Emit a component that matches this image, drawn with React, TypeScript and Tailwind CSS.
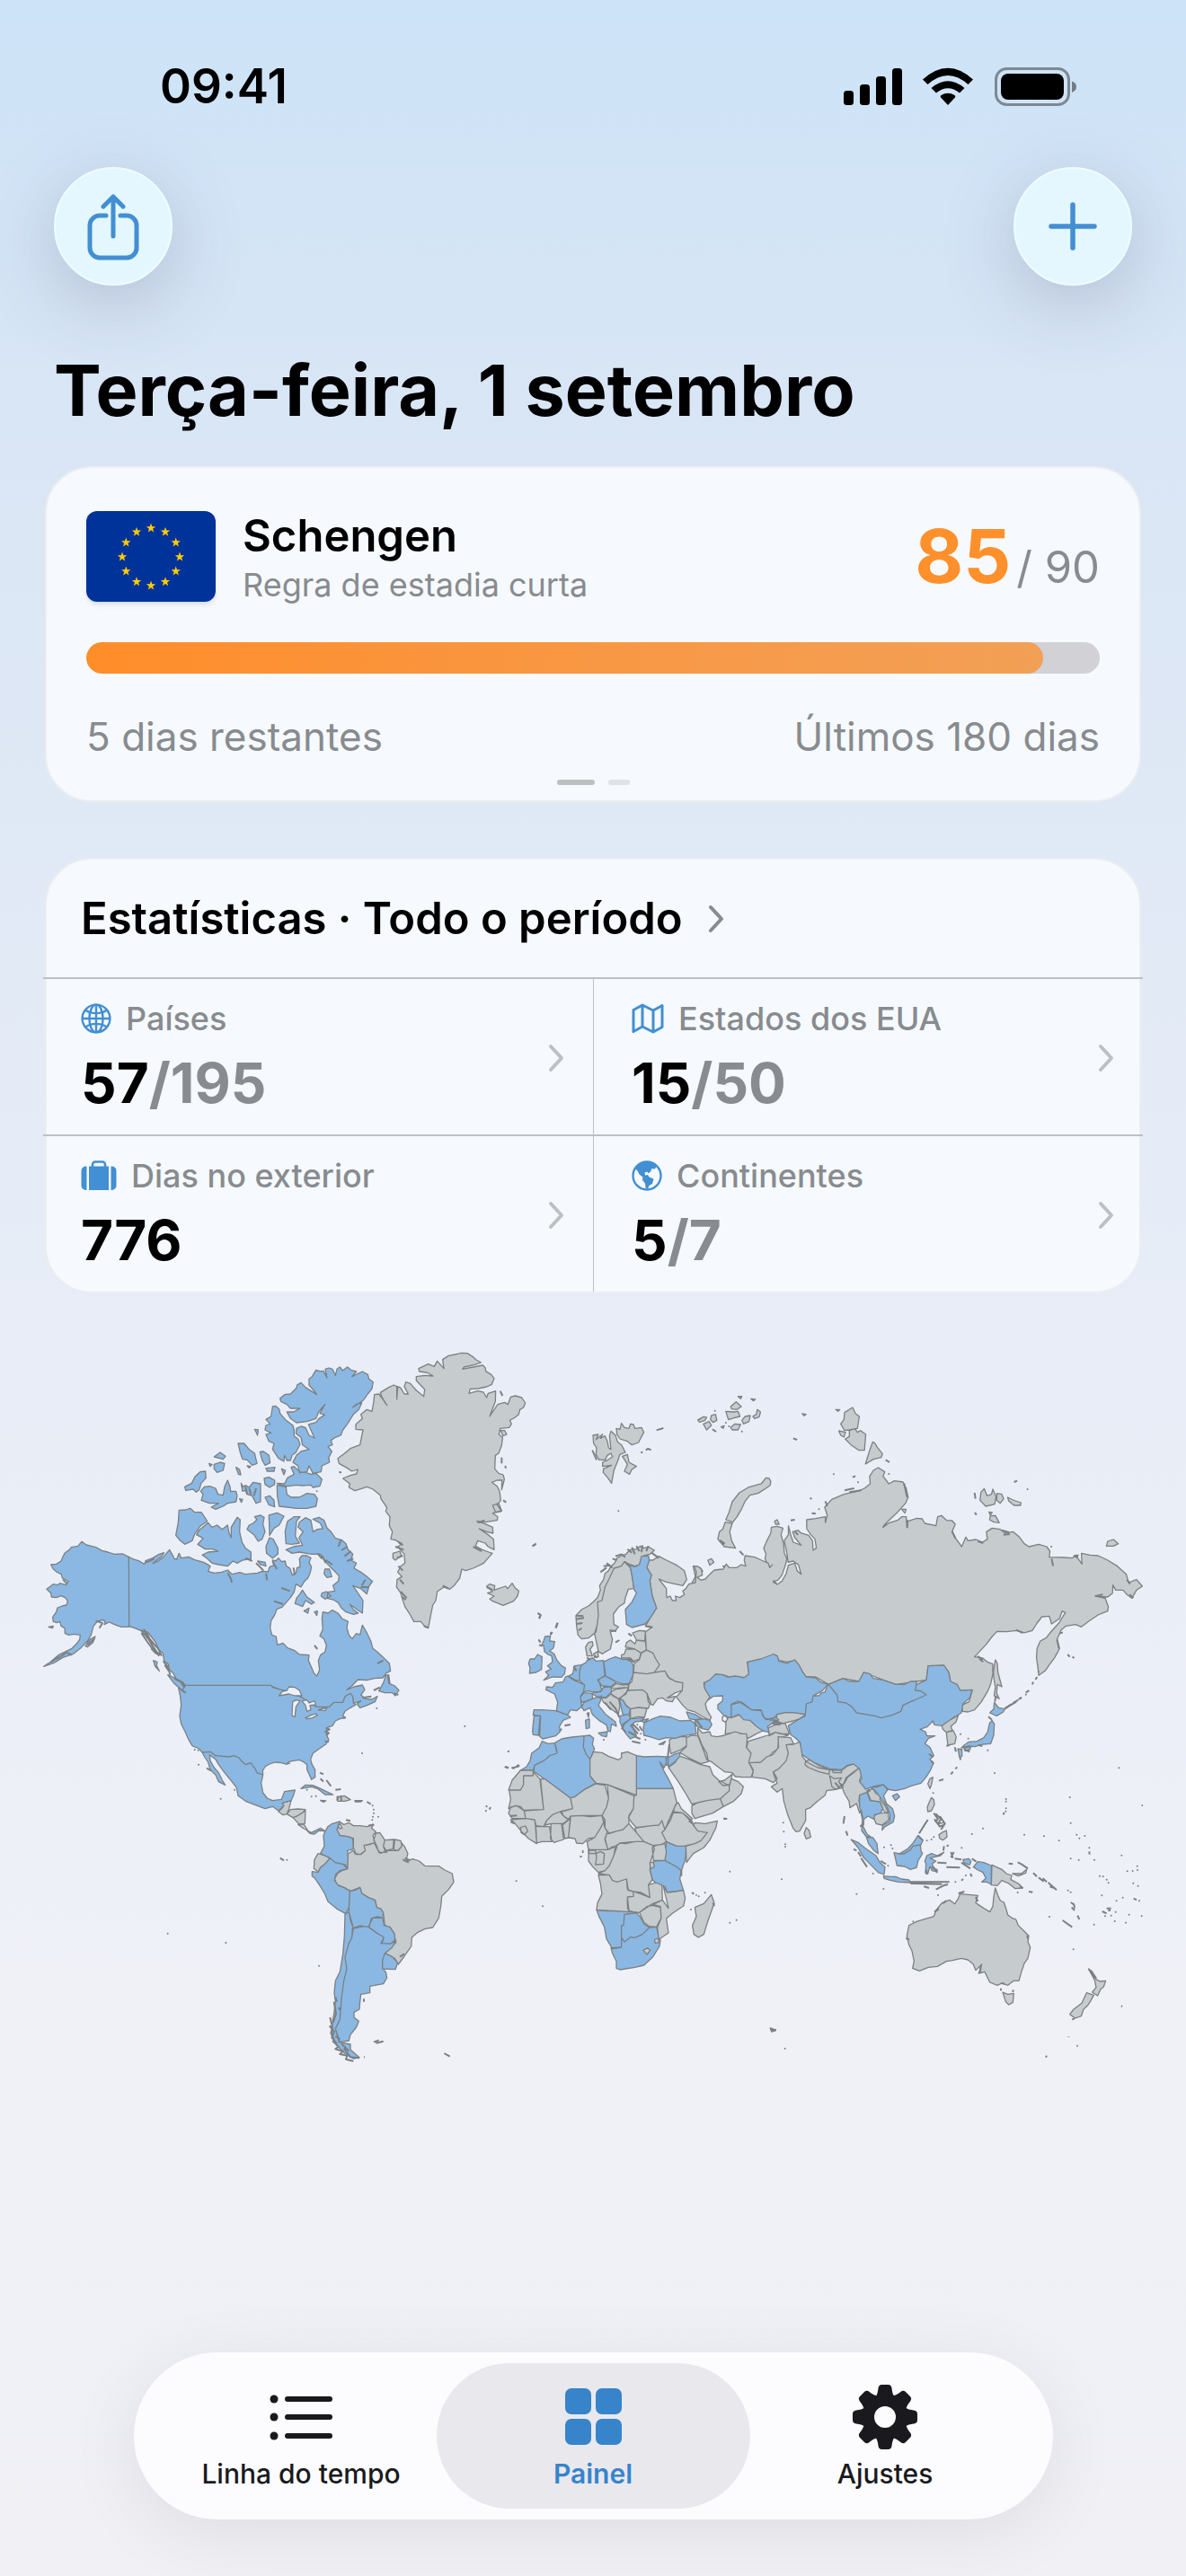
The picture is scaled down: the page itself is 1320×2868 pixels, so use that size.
import type { ReactNode } from "react";

type Layer = { kind: "visited" | "land" | "water" | "coast" | "dots"; d: string };
type Region = { name: string; transform: string; layers: Layer[] };

const layerClass = {
  visited: "fill-[#8ab8e3] stroke-[#7c8082]",
  land: "fill-[#c6cbce] stroke-[#7c8082]",
  water: "fill-[#ecf0f8] stroke-[#7c8082]",
  coast: "fill-none stroke-[#7c8082] [stroke-width:2px]",
  dots: "fill-none stroke-[#7c8082] [stroke-width:2px]",
};

// Each region has its own drawing units, placed on the map by its transform
const regions: Region[] = [
  {
    name: "north-america",
    transform: "translate(40 1490) scale(0.33333)",
    layers: [
      {
        kind: "visited",
        d: `M310,724 290,714 262,715 240,708 220,703 200,692 185,688 168,684 153,673 140,688 118,692 112,700 96,712 90,724 84,738 68,748 50,750 58,765 70,775 85,782 88,795 108,806 100,818 80,812 72,818 58,815 36,832 50,845 52,858 68,860 85,854 100,862 106,872 102,885 88,888 72,894 68,908 56,925 58,940 70,944 80,940 84,955 96,962 97,980 110,985 125,982 148,985 146,1000 135,1015 120,1030 100,1040 75,1052 50,1074 26,1090 60,1078 90,1060 125,1048 150,1028 172,1005 184,985 188,970 192,955 205,940 222,934 232,940 228,950 245,942 262,950 285,958 311,958Z
        M310,724 325,732 345,738 362,748 370,735 390,728 410,716 428,710 420,722 400,738 390,746 408,738 425,725 446,700 456,718 462,730 470,732 478,712 485,728 510,724 530,734 560,742 582,755 575,772 595,778 620,775 640,768 655,782 680,776 700,782 740,778 755,772 775,774 780,758 795,752 790,735 800,738 810,728 820,740 832,738 836,755 848,762 856,785 868,778 872,760 882,758 880,730 888,720 905,720 918,728 912,742 920,758 916,776 908,795 895,808 885,825 868,815 862,842 850,860 832,880 822,892 805,898 796,920 785,938 782,962 788,985 802,990 806,1018 825,1012 840,1028 862,1036 880,1050 912,1052 910,1070 918,1088 928,1112 938,1122 947,1102 943,1070 950,1052 965,1042 970,1020 962,998 948,988 958,965 955,930 958,908 975,912 990,902 1008,912 1022,930 1042,940 1038,960 1045,985 1056,998 1070,980 1082,984 1090,952 1105,978 1118,1005 1125,1030 1140,1042 1158,1058 1180,1080 1184,1105 1170,1112 1158,1128 1130,1130 1105,1136 1075,1134 1055,1155 1038,1168 1062,1158 1090,1152 1098,1168 1085,1185 1100,1198 1122,1200 1140,1190 1132,1208 1100,1222 1082,1228 1072,1215 1085,1205 1065,1212 1048,1226 1030,1235 1018,1262 940,1250 890,1225 850,1175 815,1168 785,1155 500,1155 490,1142 470,1136 458,1112 445,1100 442,1082 428,1072 424,1045 410,1035 400,1010 385,990 372,975 350,970 330,962 311,956Z
        M935,100 948,104 960,103 972,127 966,97 978,93 990,97 1000,118 1005,97 1015,90 1024,102 1040,90 1052,100 1070,105 1055,122 1090,105 1108,115 1112,130 1126,140 1122,162 1108,180 1094,200 1058,225 1070,214 1088,210 1078,232 1060,248 1040,280 1025,300 1018,318 1000,325 985,335 990,350 975,355 988,372 978,392 980,408 955,420 952,440 925,445 912,420 905,440 880,443 875,420 858,408 870,385 885,372 912,365 890,350 885,325 868,312 870,295 885,288 900,292 912,318 930,327 918,300 910,282 935,275 945,262 964,250 948,244 965,215 945,238 935,262 905,272 870,276 850,262 838,240 860,240 882,228 850,228 838,215 818,205 815,195 830,182 850,180 870,160 872,150 885,142 900,158 938,182 925,165 912,150 912,130 922,122Z
        M790,222 800,220 812,230 815,245 835,268 858,285 862,300 862,320 875,330 882,348 868,375 855,385 850,402 838,402 830,385 828,405 810,395 800,380 790,365 795,345 778,338 768,315 785,310 765,300 768,285 782,280 768,265 785,255Z
        M675,345 695,345 712,365 730,378 738,412 722,418 705,400 690,398 682,375Z M748,373 760,372 778,385 782,410 765,418 755,400Z
        M595,390 615,375 633,388 625,398Z M595,415 615,408 630,412 625,435 605,442 595,430Z M578,412 588,416 582,422Z
        M497,490 520,478 532,455 548,440 566,438 568,460 552,478 545,500 535,508 525,498 500,502Z
        M552,535 558,515 550,505 562,490 580,488 600,495 608,515 625,518 630,490 640,468 648,490 650,505 668,505 672,520 668,540 640,545 625,555 600,565 585,558 610,545 580,545Z
        M685,478 692,490 700,485 712,492 725,475 750,480 750,540 735,545 722,520 705,515 700,502 690,505Z M680,530 690,532 686,542Z
        M762,462 778,458 797,468 797,482 780,492 765,482Z M768,428 798,425 795,438 772,438Z M820,430 833,435 828,450Z M668,425 680,432 684,450 676,448Z M730,298 742,300 740,318Z M705,420 717,422 712,427Z
        M805,478 830,480 840,460 862,448 852,425 862,422 880,440 900,442 918,448 935,445 955,465 948,488 925,492 918,484 888,486 870,484 842,488 820,486Z
        M805,485 835,490 838,515 852,525 880,525 905,512 930,515 940,530 935,555 905,562 870,562 838,558 812,555 806,520Z M765,525 780,520 795,535 797,557 778,550Z
        M478,568 500,567 515,562 530,575 552,575 572,605 548,622 530,648 522,670 497,682 480,668 467,652 475,610Z
        M575,610 588,625 605,618 622,632 640,618 645,645 652,660 652,625 672,592 682,600 680,640 688,675 700,695 718,708 718,730 690,735 672,745 658,738 640,755 610,750 588,745 570,728 555,718 575,708 608,705 590,698 565,698 540,682 558,662 536,650 545,635Z
        M730,590 750,585 762,592 758,615 765,640 755,665 742,672 728,650 705,632 712,618 725,612 738,600Z
        M778,585 805,577 828,588 812,618 795,628 780,652Z M780,660 792,665 808,695 808,715 790,728 770,712 768,690Z
        M835,680 832,640 840,605 862,590 882,590 870,605 868,630 866,655 880,678 855,682Z
        M880,608 900,593 918,602 925,640 940,632 958,630 950,612 925,598 945,592 962,602 972,628 985,640 1000,662 1022,668 1035,680 1042,700 1058,715 1052,735 1070,745 1062,762 1085,775 1105,790 1124,806 1112,822 1105,848 1085,830 1058,820 1072,840 1092,870 1090,912 1072,900 1048,882 1060,900 1076,912 1060,916 1035,908 1020,895 1010,878 995,868 972,862 975,842 998,838 992,820 1010,805 1012,788 1000,775 985,760 968,742 950,715 920,715 880,708 855,712 835,700 860,690 890,685 878,660 892,640 875,625Z
        M890,835 905,858 930,876 920,882 900,870 890,890 878,885 865,880 870,862 880,850Z M955,845 970,840 985,855 965,865 952,855Z M965,765 980,765 988,790 972,793 962,780Z
        M895,905 912,895 908,912Z M930,908 940,905 938,920Z M740,738 765,742 768,755 750,750Z
        M1168,1120 1160,1145 1145,1172 1165,1178 1190,1178 1200,1188 1212,1170 1198,1155 1182,1148 1178,1118Z
        M440,1118 462,1128 488,1142 500,1165 500,1182 482,1165 460,1145Z M165,1022 180,1000 198,990 190,1010 172,1025Z M392,1070 405,1075 403,1088 412,1105 398,1090Z M42,958 58,955 55,962Z`,
      },
      {
        kind: "coast",
        d: `M350,968 365,985 378,1002 390,1022 402,1040 415,1052 M360,965 372,990 388,1010 408,1030 420,1055 M352,978 372,1008 392,1035 412,1055 M368,975 380,998 400,1022 M385,1030 402,1048 M425,1072 440,1090 448,1118 M430,1085 446,1108 M462,1130 482,1140 496,1160 498,1178 M200,938 222,945 212,962 M100,1042 120,1052 M640,778 650,795 654,810 M768,780 772,802 M860,760 864,785 M820,828 848,838 M795,872 825,882 M930,1020 940,1032 M700,728 722,738 M735,745 760,770 M790,740 805,765 M1090,1195 1120,1190 M1128,1170 1148,1160 M940,712 955,730 M955,720 968,745 M968,735 990,750 M1018,668 1010,690 M1040,690 1020,702 M1052,705 1030,722 M1060,730 1038,738 M1100,800 1088,820 M1110,825 1085,825 M1140,1080 1160,1070 M50,1075 75,1058 M70,1065 100,1045 M700,490 705,515 M712,495 718,515 M735,495 728,520 M365,745 368,735 M370,742 395,730 M1175,1120 1180,1148 M1195,1180 1210,1185 M90,800 105,815 M172,1018 195,998`,
      },
    ],
  },
  {
    name: "americas",
    transform: "translate(160 1840) scale(0.33333)",
    layers: [
      {
        kind: "land",
        d: `M450,525 465,510 460,497 475,492 492,488 485,515 478,533 465,536Z M478,533 490,518 515,516 540,518 528,530 512,540 498,545Z M498,545 515,538 540,522 538,565 518,566Z M515,568 535,568 548,588 535,582Z
        M645,475 670,472 690,485 672,490 648,490Z M590,487 608,489 600,493Z M705,488 730,488 725,492 706,492Z
        M655,560 668,568 685,562 700,572 720,572 745,575 768,568 760,580 775,592 765,605 772,628 755,635 735,638 740,655 722,668 708,665 700,645 700,614 680,608 655,605 645,590Z
        M775,597 788,595 805,620 800,640 812,660 785,662 778,640 768,620Z M805,620 835,618 832,650 805,655 800,640Z M838,618 858,622 862,640 848,655 835,652Z
        M570,685 582,665 605,672 622,680 605,700 590,712 582,726 568,715Z
        M680,668 698,655 708,668 725,668 740,655 735,638 770,630 780,650 790,664 815,655 850,655 862,640 860,628 870,640 882,665 875,690 898,683 920,690 938,706 985,707 1005,720 1030,732 1035,760 1018,785 995,808 992,840 985,880 965,912 940,916 915,928 895,945 893,975 870,1008 850,1035 838,1015 805,998 842,962 835,930 822,912 805,905 800,865 792,850 778,845 772,820 750,812 728,798 722,778 690,790 668,778 645,768 637,750 648,730 662,722 680,716Z`,
      },
      {
        kind: "visited",
        d: `M140,103 425,103 430,110 460,118 485,125 530,145 575,175 620,175 635,160 665,160 672,140 690,130 698,140 700,162 708,168 690,178 672,190 665,205 672,212 655,215 640,222 630,238 612,245 610,268 618,285 608,300 590,312 565,330 557,350 562,368 572,385 572,410 560,418 552,400 545,385 545,368 532,358 520,352 500,355 485,358 478,367 460,362 440,360 420,366 405,375 397,388 398,402 378,395 372,382 357,362 340,368 328,358 318,345 300,338 285,342 240,338 222,325 195,327 185,315 162,305 150,285 140,262 125,232 120,205 125,170 122,140 116,112 128,120Z
        M195,327 222,325 240,338 285,342 300,338 318,345 328,358 340,368 357,362 372,382 378,395 398,402 392,430 398,462 412,480 430,488 460,484 470,458 505,453 500,470 492,488 462,496 468,505 450,522 430,508 405,515 365,500 340,490 315,472 310,445 292,422 270,395 250,368 240,350 220,335 222,355 235,378 250,395 262,420 272,436 250,425 240,402 222,385 215,360 205,345Z
        M545,588 560,595 590,580 605,590 585,588 570,600 555,598Z
        M525,448 540,436 565,437 590,448 610,458 632,468 605,468 580,448 560,442Z
        M605,592 615,575 630,565 655,558 645,585 655,605 680,608 698,615 700,650 680,655 682,675 680,716 665,700 640,695 622,680 590,665 603,640 600,605Z
        M562,725 582,728 590,712 605,700 622,680 640,695 672,702 680,716 655,722 640,735 637,755 650,772 668,778 688,790 685,845 675,866 645,850 615,825 605,800 590,775 572,748 562,740Z
        M688,790 705,788 722,778 728,798 750,812 772,820 778,845 792,850 800,862 798,880 765,880 750,910 735,908 700,915 690,888 685,860Z
        M760,882 780,876 798,880 802,905 822,910 838,935 838,955 825,966 792,965 802,945 770,925 752,912Z
        M697,915 720,906 750,910 775,928 802,945 795,965 825,966 842,955 830,978 805,998 797,1022 797,1048 808,1060 812,1080 800,1100 755,1108 755,1130 725,1135 722,1160 720,1185 702,1195 702,1212 718,1225 710,1245 690,1270 685,1290 655,1295 640,1250 655,1220 660,1150 668,1090 678,1050 672,1010 685,965 695,945Z
        M805,998 830,1010 848,1030 840,1052 797,1050 797,1022Z
        M672,866 685,860 700,915 695,945 685,965 672,1010 678,1050 668,1090 660,1150 655,1220 640,1250 652,1295 690,1302 690,1320 720,1346 700,1350 668,1330 645,1305 628,1275 628,1240 635,1200 640,1160 636,1130 640,1090 655,1060 665,1000 670,940Z`,
      },
      {
        kind: "water",
        d: `M452,138 462,124 478,120 485,108 505,110 520,120 528,138 505,138 485,132Z M497,158 510,152 522,155 508,175 505,208 495,205Z M528,155 545,152 552,162 570,155 575,168 555,170 558,185 545,190 540,170Z M540,212 558,203 575,198 580,203 560,213 545,215Z M582,185 600,180 612,180 605,188Z M648,570 656,568 662,580 655,582Z`,
      },
      {
        kind: "coast",
        d: `M608,245 620,250 606,258 618,262 610,270 M665,212 675,210 M605,290 618,292 M478,362 488,365 M635,1160 642,1200 632,1230 M622,1212 630,1245 625,1265 635,1285 M620,1240 636,1260 628,1280 645,1300 M630,1290 650,1310 640,1318 665,1325 655,1335 680,1340 675,1352 700,1358 M640,1275 655,1285 M660,1300 685,1325 M668,1315 690,1345 720,1348 M735,1345 738,1345 M768,1295 785,1288 M775,1298 800,1292 M1003,1332 1022,1343 M640,1145 645,1160 M650,1180 658,1188 M455,680 468,688 M650,475 645,488 M658,472 660,490 M675,553 690,556 M865,685 885,695 M872,680 890,688 M855,1010 870,1000 M210,380 225,388 M125,118 140,128 M588,395 600,400 M590,415 600,425 M610,420 625,440 M640,452 658,450 M745,492 758,500 M735,1150 735,1160 M768,568 750,572`,
      },
      {
        kind: "dots",
        d: `M729,330h.1 M1072,240h.1 M778,180h.1 M183,368h.1 M257,482h.1 M303,452h.1 M80,932h.1 M274,963h.1 M585,1040h.1 M560,475h.1 M575,473h.1 M764,505h.1 M768,518h.1 M768,530h.1 M765,542h.1 M763,553h.1 M783,542h.1 M478,686h.1 M545,452h.1 M170,318h.1 M182,320h.1`,
      },
    ],
  },
  {
    name: "greenland",
    transform: "translate(340 1490) scale(0.33333)",
    layers: [
      {
        kind: "land",
        d: `M500,48 520,43 540,44 558,55 570,66 586,75 565,82 530,90 524,97 560,90 592,84 600,92 602,104 620,115 630,128 622,148 605,156 575,162 550,163 546,178 575,170 594,174 605,192 610,178 635,170 634,205 615,255 625,240 642,215 665,208 676,215 685,190 700,186 722,192 734,210 728,225 716,232 712,248 700,258 682,268 688,280 680,292 650,295 646,315 658,325 655,352 645,378 634,385 632,430 645,445 660,450 664,465 655,500 656,468 640,468 622,475 640,488 648,505 652,535 640,550 655,572 625,578 642,590 640,602 620,605 600,608 572,605 600,614 625,625 626,645 605,640 580,630 610,650 628,665 630,700 610,690 600,678 575,670 568,688 590,700 612,708 624,712 608,730 595,745 560,762 535,770 522,765 515,795 498,818 482,832 462,825 440,840 435,870 425,885 418,920 410,962 398,955 385,940 362,940 348,915 332,890 322,860 318,845 304,825 306,800 322,790 308,775 318,755 332,745 330,715 308,690 322,680 300,668 285,665 290,640 280,620 282,590 268,572 272,560 252,530 250,518 225,498 205,490 185,497 165,503 145,492 148,480 125,462 150,452 170,447 175,432 155,438 135,425 112,412 108,395 128,380 150,362 182,350 188,320 192,300 168,298 168,282 190,262 185,248 205,232 222,238 228,205 230,182 245,180 260,200 272,218 255,190 250,175 278,158 295,150 305,155 305,198 308,155 318,160 330,180 343,180 330,155 335,140 350,145 370,168 395,188 398,165 370,135 370,122 398,118 426,120 405,108 380,105 378,95 410,80 430,88 440,70 462,95 458,65 478,52Z
        M292,712 315,705 320,720 300,735 292,728Z M652,302 665,302 672,315 660,320Z M625,552 645,545 655,570 635,575Z
        M605,822 615,815 632,820 630,835 650,828 668,822 675,830 690,812 700,828 712,838 708,855 695,872 660,886 640,878 625,872 615,865 630,855 608,845 625,840Z`,
      },
      {
        kind: "coast",
        d: `M758,688 770,681 M776,912 785,918 781,930 M836,962 842,944 M818,985 824,975 M655,392 655,412 M650,170 658,186 M667,420 669,428 M112,440 120,443 M660,535 670,542 M310,755 325,770 M315,800 328,815 M318,840 338,862 M322,858 335,868 M605,825 625,835 M575,610 598,602 M560,690 588,705 M458,820 478,830 M395,955 408,960 M300,690 328,700 M310,675 325,685 M305,728 325,720`,
      },
      { kind: "dots", d: "M38,505h.1" },
    ],
  },
  {
    name: "svalbard",
    transform: "translate(640 1560) scale(0.33333)",
    layers: [
      {
        kind: "land",
        d: `M60,108 78,105 70,122 92,104 85,118 100,110 108,128 112,150 120,155 115,110 120,94 135,108 142,130 155,140 168,165 150,172 142,195 130,225 122,268 108,248 94,232 95,220 122,208 92,212 92,198 110,190 125,180 120,168 108,175 100,190 80,190 70,172 72,150 62,135Z
        M138,85 150,88 155,68 165,82 180,85 185,70 195,72 200,85 222,82 230,98 218,120 212,132 190,140 175,128 150,120 140,105Z M158,178 175,172 180,198 205,212 190,222 182,238 165,228 175,205Z`,
      },
      {
        kind: "coast",
        d: `M272,91 295,84 M236,157 244,153 254,157 M58,158 72,190 M222,162 224,168 M410,58 420,52`,
      },
    ],
  },
  {
    name: "north-asia",
    transform: "translate(740 1540) scale(0.35714 0.33333)",
    layers: [
      {
        kind: "land",
        d: `M328,608 320,600 312,580 315,565 308,545 318,520 330,495 332,475 350,472 368,478 362,500 370,530 372,560 380,580 376,600 365,635 352,652 335,656 350,666 365,655 378,630 385,602 405,595 412,620 425,632 416,600 400,588 384,592 380,560 372,520 385,500 385,470 392,500 400,525 425,535 405,510 398,490 415,485 425,495 448,502 460,520 462,552 472,545 468,515 455,500 442,480 442,450 470,446 500,440 500,460 506,435 498,408 520,382 560,364 600,355 622,345 640,330 638,305 650,285 665,276 685,290 680,305 698,330 715,320 742,324 752,345 758,375 750,395 725,425 712,438 695,455 680,475 700,460 725,452 738,440 752,440 755,475 758,455 785,445 802,447 810,462 845,470 850,440 862,436 878,452 895,453 905,465 895,490 908,515 925,540 938,508 945,520 970,516 990,525 1005,515 1002,490 1020,478 1045,482 1060,495 1085,490 1105,508 1120,530 1135,540 1165,532 1190,540 1200,555 1198,575 1240,576 1270,578 1280,568 1300,598 1298,562 1325,568 1350,570 1380,585 1410,605 1438,632 1445,660 1470,650 1488,672 1470,685 1455,712 1440,700 1428,685 1405,685 1396,668 1395,695 1380,708 1345,706 1372,712 1382,740 1380,755 1350,768 1320,790 1298,808 1280,800 1250,805 1235,818 1222,850 1230,880 1215,910 1198,935 1185,955 1165,970 1162,940 1158,910 1160,880 1170,855 1188,845 1205,822 1228,795 1248,760 1238,755 1230,780 1205,798 1198,772 1175,774 1160,795 1145,820 1120,828 1095,820 1065,824 1035,823 1020,840 1000,868 965,908 990,912 1005,925 1022,932 1022,965 1015,1000 1005,1025 985,1060 965,1085 945,1092 928,1090 925,1070 948,1058 958,1020 920,1022 910,1000 890,992 885,960 870,937 820,938 815,985 785,990 720,1000 680,985 620,960 605,990 555,980 510,1000 470,975 440,975 430,960 405,920 380,925 355,920 350,905 330,900
        M330,322 328,335 315,345 290,362 265,368 250,388 240,412 225,440 212,458 190,450 200,425 210,390 232,360 260,342 300,330 315,310 325,312Z M188,458 210,462 202,490 208,520 220,545 185,540 165,515 170,490 180,482Z
        M1030,918 1036,930 1038,960 1050,1008 1036,1000 1034,1030 1042,1048 1026,1038 1030,1010 1025,980 1024,955Z
        M585,75 594,95 606,105 600,145 575,150 560,152 548,130 558,115 560,92Z M575,152 592,146 600,158 610,152 626,165 622,218 605,218 580,200 562,180 575,172Z M640,212 648,190 655,195 662,208 678,230 674,242 650,248 625,264 632,240Z M542,153 563,158 558,174 548,168Z
        M103,118 120,106 130,108 125,118 108,124Z M120,130 138,122 145,135 130,150Z M145,102 158,98 162,118 150,125 142,115Z M205,72 222,56 232,66 238,72 225,82 208,80Z M190,88 215,90 228,88 234,105 215,110 198,116Z M240,118 250,105 266,102 262,122 245,130Z M274,105 285,98 288,82 298,90 294,106 280,112Z M205,142 218,130 236,132 228,150 210,150Z M228,38 240,38 236,46Z M268,46 282,48 276,53Z M532,82 545,82 540,88Z M428,96 440,98 434,103Z M175,140 185,136 182,145Z
        M985,358 995,346 1004,370 1018,365 1022,348 1032,372 1028,398 1000,405 982,385Z M1035,362 1050,365 1056,380 1045,395 1034,385Z M1068,375 1085,384 1110,393 1108,402 1088,402 1072,388Z M1014,437 1030,436 1042,460 1025,458 1012,450Z M1010,424 1020,426 1014,434Z M1376,538 1380,522 1398,516 1413,530 1398,538Z
        M134,585 145,580 153,592 140,602Z M342,455 350,450 356,465 345,465Z M738,415 752,415 748,428Z M1275,570 1288,568 1285,578Z
        M88,605 110,610 118,622 105,640 95,668 85,660 95,640Z
        M190,1110 215,1108 230,1102 265,1120 305,1155 285,1165 260,1180 240,1165 220,1160 188,1165 190,1140Z M350,1100 375,1094 405,1094 438,1100 420,1115 400,1122 370,1130 345,1128Z M322,1145 345,1135 375,1130 388,1165 360,1165 345,1160 325,1172Z
        M260,1190 290,1180 320,1170 345,1160 385,1170 355,1180 352,1215 335,1228 318,1250 300,1262 262,1262 252,1220Z`,
      },
      {
        kind: "visited",
        d: `M120,1015 125,992 145,975 160,965 180,968 195,975 220,970 245,978 260,965 258,922 285,912 315,905 335,897 350,905 355,922 380,930 405,918 418,935 430,960 440,975 470,978 485,992 508,1000 490,1022 465,1036 462,1058 442,1068 438,1100 400,1094 375,1094 350,1100 332,1120 310,1112 300,1088 270,1085 235,1060 207,1068 207,1112 185,1105 165,1082 165,1068 180,1055 180,1038 150,1040 135,1052Z
        M207,1066 228,1056 240,1060 270,1085 300,1085 305,1105 315,1118 345,1110 355,1118 335,1130 320,1140 325,1160 305,1155 285,1140 265,1120 245,1118 230,1100 207,1112Z`,
      },
      {
        kind: "coast",
        d: `M335,655 348,662 M170,518 185,532 M500,388 506,405 M560,352 590,345 M575,358 612,352 M745,328 755,375 M755,478 755,450 M680,475 690,462 M895,488 905,512 M975,522 992,528 M1050,485 1072,492 M1055,500 1075,498 M1205,580 1210,605 M1340,706 1365,700 M1440,650 1450,665 M1448,700 1460,712 M975,905 990,918 M980,915 992,925 M1230,830 1240,826 M1222,850 1228,880 M1255,900 1262,908 M1270,908 1276,912 M1095,818 1115,828 M180,605 200,610 M688,250 700,258 M400,178 412,183 M585,308 594,304 M458,428 470,430 M965,360 968,380 M966,426 971,434 M1088,324 1098,320 M454,376 456,382 M233,555 245,568 M392,452 405,450 M148,148 160,156 M1060,1080 1080,1068 1095,1058 M1102,1050 1112,1044 M1145,1000 1148,992 M1155,984 1160,975 M405,490 415,500 M335,1128 350,1125 M340,1118 360,1130`,
      },
      {
        kind: "dots",
        d: `M156,86h.1 M190,126h.1 M240,155h.1 M200,138h.1 M526,298h.1 M698,297h.1 M602,325h.1 M480,415h.1 M1130,348h.1 M1204,540h.1 M1125,1034h.1 M1133,1022h.1 M1165,958h.1`,
      },
    ],
  },
  {
    name: "south-asia-oceania",
    transform: "translate(840 1880) scale(0.33333)",
    layers: [
      {
        kind: "land",
        d: `M-9,290 -5,265 -19,242 20,240 40,222 60,215 80,190 78,155 120,158 130,178 105,182 112,210 105,235 80,262 62,272 75,295 62,308 35,295Z
        M105,182 130,180 150,172 158,195 158,220 175,240 210,258 250,265 290,268 310,252 335,245 350,258 330,275 310,290 300,310 285,320 275,330 240,335 235,350 210,370 185,392 170,398 170,435 150,470 138,472 128,460 110,415 97,370 92,328 75,340 55,322 75,310 65,285 62,272 80,262 105,235 112,210Z
        M170,235 185,232 215,252 250,265 248,280 215,272 180,258 168,248Z M258,262 288,262 290,275 262,275Z M250,285 265,295 290,292 280,305 295,325 270,330 258,322Z
        M350,258 358,280 350,300 362,312 385,335 368,345 350,350 348,370 358,400 350,410 340,378 318,392 315,370 300,345 292,325 305,292 320,280Z
        M375,335 395,328 405,345 420,350 418,365 435,385 445,405 438,410 425,395 418,375 388,368Z M395,420 415,410 445,408 448,432 425,450 405,445Z
        M172,458 182,468 187,490 172,496 165,478Z M595,290 590,315 585,328 578,312 585,295Z
        M625,118 645,100 665,92 680,82 672,105 655,120 660,135 640,140 628,130Z M640,140 662,133 673,155 668,178 645,183 642,160Z
        M590,358 598,365 600,382 590,402 578,405 576,390 582,375Z M615,482 630,472 640,468 642,490 628,500 618,495Z
        M792,583 825,598 840,612 858,618 855,632 880,645 895,660 870,662 848,645 825,635 810,652 790,650Z M860,612 890,612 908,598 905,610 880,620Z
        M803,660 812,685 820,702 832,708 838,725 845,750 862,762 872,765 880,785 900,805 915,820 912,840 920,858 912,895 900,912 892,935 882,970 865,970 845,985 825,978 810,985 785,975 775,955 768,940 748,945 758,915 738,935 730,915 712,900 690,895 660,902 640,905 610,922 580,925 550,937 527,928 532,905 525,870 515,850 508,820 515,785 540,772 575,762 598,755 605,735 625,710 650,700 668,713 680,695 685,680 712,682 745,685 738,710 765,728 785,740 795,722 798,690Z
        M828,1008 845,1015 865,1012 862,1042 848,1050 838,1040Z M1115,930 1128,945 1140,965 1152,972 1172,970 1165,990 1155,998 1145,1020 1127,1008 1140,992 1135,968Z M1108,1010 1132,1018 1120,1040 1112,1052 1098,1065 1090,1088 1070,1095 1052,1082 1065,1065 1092,1045Z`,
      },
      {
        kind: "visited",
        d: `M244,-20 235,5 220,10 215,18 195,18 192,38 172,45 170,70 168,85 150,95 112,118 120,148 135,158 152,175 158,215 178,228 200,242 250,262 290,265 310,250 330,246 350,262 358,295 350,305 370,330 400,320 430,315 442,330 470,335 500,328 520,320 555,310 572,290 585,270 596,245 585,230 598,218 585,190 568,178 580,160 602,152 575,152 570,138 552,130 575,122 595,102 600,115 625,118 665,90 690,75 695,45 718,25 726,-2 686,0 676,-20 654,-30 648,-60 632,-84 579,-82 573,-35 541,-20 471,0Z
        M460,352 475,345 484,355 470,368Z
        M800,40 815,58 835,62 830,72 808,85 785,75 798,62Z M792,100 800,112 798,150 788,178 762,180 735,188 715,186 690,192 700,182 715,172 742,170 765,158 778,138 784,110Z M678,195 692,198 692,220 684,224Z M698,192 722,188 718,198 702,202Z
        M350,350 375,340 385,368 418,372 428,395 420,410 400,415 398,430 378,420 365,430 362,455 375,480 388,490 375,492 357,468 360,425 350,388Z
        M388,325 410,322 430,315 445,330 430,352 440,378 460,395 467,420 462,440 435,455 425,467 428,450 450,438 452,415 440,385 415,352 402,335Z
        M372,488 395,492 408,512 412,545 398,535 380,512Z M322,498 345,508 370,528 405,552 418,575 435,590 432,615 412,608 385,580 365,560 345,525Z M430,620 450,622 470,622 490,630 515,633 520,642 480,640 452,634 432,628Z
        M465,542 485,546 500,545 525,520 553,515 555,535 560,545 545,570 540,592 520,598 500,588 475,585 470,562Z
        M575,552 590,545 610,552 632,540 620,552 585,560 605,570 592,580 605,605 592,602 585,588 578,612 570,610 572,580 568,570Z
        M730,590 745,572 765,575 790,585 790,648 775,640 758,640 772,628 762,608 745,600Z M695,565 715,562 722,572 718,582 700,578Z`,
      },
      {
        kind: "visited",
        d: `M246,-20 295,-40 315,-30 348,-30 364,-60 385,-55 395,-40 428,-35 471,-20 500,-20 520,-30 541,-30 536,0 555,2 573,15 540,30 520,38 495,50 488,70 460,82 423,92 400,85 340,75 325,55 305,42 278,38 275,15Z M485,545 512,528 530,508 545,485 562,500 555,515 528,520 520,532 500,545Z`,
      },
      {
        kind: "coast",
        d: `M518,640 650,640 M520,645 625,647 M565,655 582,660 M605,665 630,652 645,648 M598,410 612,430 602,440 M605,412 622,430 612,445 632,440 M600,430 618,455 630,450 M618,420 635,445 622,465 M578,432 565,452 549,478 M545,485 560,500 M610,575 640,577 M640,590 685,592 M655,540 662,560 M665,540 655,558 M668,562 690,565 M725,562 740,572 M690,575 720,595 M720,612 725,622 M690,635 696,630 M345,540 355,555 M355,560 375,590 M330,530 340,535 M300,420 296,445 M305,470 310,485 M355,400 360,430 M365,445 352,455 M420,570 438,580 M572,600 575,615 M590,590 608,600 608,610 M632,520 630,535 M645,515 643,522 M848,578 862,580 M878,574 890,580 912,595 M885,655 895,660 M915,672 928,674 M930,610 942,622 M948,625 965,638 M962,628 975,640 M980,642 1008,667 M985,655 1000,660 M1055,708 1066,715 1068,728 M1058,725 1068,735 M1078,752 1084,765 M1028,768 1060,791 M1160,738 1175,745 M1175,728 1190,728 M1180,735 1188,735 M1115,930 1135,960 M1122,935 1140,962 M1060,1100 1068,1095 M972,1226 975,1220 M52,1126 58,1142 M58,1128 64,1140 M64,1132 70,1138 M52,1134 72,1134 M505,828 516,832 M755,920 752,945 M600,740 615,730 M640,702 628,712 M680,678 700,672 M738,690 745,705 M910,818 912,830 M822,978 835,980 M822,995 822,1003 M863,1000 862,1008 M655,280 662,272 M670,262 676,256 M615,302 630,297 M668,190 672,205 M640,185 650,183 M685,225 688,232 M745,182 760,186 M700,198 718,205 M780,88 792,98 M835,62 858,45 M862,42 880,32 M885,28 890,25 M905,8 915,0 M805,18 802,38 M582,212 594,222 M590,235 598,245 M285,310 292,325 M268,308 282,325 M60,100 90,110 M60,112 85,115 M1117,538 1118,548 M1265,695 1275,700 M1238,774 1240,778 M1224,1054 1227,1057 M830,415 833,408 M1048,1156 1049,1158`,
      },
      {
        kind: "dots",
        d: `M95,442h.1 M97,472h.1 M102,514h.1 M102,522h.1 M90,631h.1 M430,663h.1 M340,680h.1 M101,1196h.1 M1077,1187h.1 M1064,865h.1 M984,756h.1 M1133,782h.1 M839,363h.1 M839,371h.1 M839,394h.1 M838,404h.1 M725,480h.1 M762,461h.1 M691,526h.1 M900,482h.1 M966,487h.1 M1016,502h.1 M1052,357h.1 M1055,443h.1 M1075,482h.1 M1102,486h.1 M1084,494h.1 M1117,526h.1 M1134,566h.1 M1082,566h.1 M1055,562h.1 M1225,551h.1 M1277,587h.1 M1278,600h.1 M1262,603h.1 M1244,604h.1 M1152,620h.1 M1163,622h.1 M1175,632h.1 M1181,643h.1 M1264,644h.1 M1280,653h.1 M1159,685h.1 M1229,692h.1 M1284,703h.1 M1208,703h.1 M1250,749h.1 M1292,754h.1 M1202,771h.1 M1205,740h.1 M1190,752h.1 M1170,754h.1 M1046,668h.1 M1055,674h.1 M1294,384h.1 M1216,259h.1 M801,276h.1 M778,200h.1 M596,343h.1 M713,161h.1 M687,146h.1 M432,524h.1 M455,517h.1 M445,586h.1 M460,528h.1 M598,490h.1 M590,498h.1 M575,502h.1 M395,612h.1 M612,684h.1 M705,618h.1 M670,640h.1 M878,675h.1 M529,772h.1`,
      },
    ],
  },
  {
    name: "europe",
    transform: "translate(560 1680) scale(0.33333)",
    layers: [
      {
        kind: "land",
        d: `M900,180 890,190 885,175 862,165 840,155 808,150 805,165 810,185 795,180 780,190 755,190 745,178 735,195 705,198 690,212 675,228 660,232 648,222 665,215 662,195 650,186 638,185 645,205 642,240 620,245 610,260 600,268 605,280 590,290 575,285 578,300 565,300 558,285 546,290 545,260 520,228 545,238 575,245 600,250 613,230 605,200 580,182 545,165 520,152 500,165 485,165 480,190 495,215 490,235 498,285 512,325 490,360 475,385 498,388 475,405 478,465 500,475 508,492 522,515 505,540 540,535 550,555 575,570 600,575 598,600 578,622 600,650 615,665 640,672 670,690 690,700 695,690 680,665 675,645 690,622 672,592 670,575 690,565 710,545 735,548 755,555 775,552 805,557 820,545 815,505 860,495 900,480
        M243,350 262,330 285,318 300,305 315,290 325,265 322,250 335,230 340,210 352,200 360,185 372,175 380,158 395,150 410,145 425,130 445,128 458,118 470,125 485,120 505,132 490,145 470,150 455,180 440,185 420,178 405,170 395,185 370,192 355,225 340,255 330,300 315,305 318,350 313,385 310,405 285,425 262,428 250,415 245,385Z
        M405,170 425,190 430,215 437,260 418,262 408,290 405,308 385,322 368,345 370,380 385,388 375,400 358,405 365,430 358,462 330,478 318,470 305,410 313,385 318,350 315,305 330,300 340,255 355,225 370,192 395,185Z
        M275,455 285,440 298,437 300,450 290,462 298,485 280,485Z M302,478 316,470 318,488 305,490Z
        M432,408 455,400 475,402 473,435 445,432 438,418Z M408,455 412,440 425,432 440,445 445,432 475,436 478,465 460,475 440,462Z M405,478 410,462 440,462 460,475 455,495 435,503 425,492 395,492 395,482Z
        M435,540 438,510 455,497 462,475 480,465 500,475 508,492 522,515 505,540 480,545Z M420,580 430,570 435,540 480,545 505,540 540,535 555,560 575,570 600,575 598,600 575,608 548,625 575,620 565,638 545,635 532,625 515,628 500,650 485,640 480,610 465,598 418,600Z
        M328,625 345,625 360,612 385,628 390,650 385,680 365,665 345,648 335,640Z M358,605 385,592 418,590 410,612 385,628 365,618Z M358,592 378,577 400,582 418,580 418,590 385,595Z M418,600 465,598 480,610 492,640 485,660 450,657 425,662 405,645 390,628Z M425,662 450,657 480,660 472,690 450,688 425,695Z
        M555,765 580,755 612,755 612,785 590,800 560,812 556,790Z M612,758 630,750 652,752 665,785 680,810 685,838 660,845 625,828 590,808 612,788Z
        M650,725 665,742 690,738 695,752 715,755 740,750 775,738 795,745 812,745 815,760 812,790 828,810 820,840 835,870 828,890 800,890 775,888 765,875 740,872 710,850 695,838 680,832 665,790 650,752Z
        M552,858 575,840 585,818 620,830 660,848 690,855 700,882 720,900 755,918 755,935 725,962 680,968 650,975 630,980 610,945 585,905Z M630,985 650,975 680,968 725,962 735,988 700,1010 640,1028 630,1010Z M755,935 755,918 762,895 785,905 802,922 795,945 770,970 735,988 725,962Z M720,905 740,900 765,880 757,915 735,918Z`,
      },
      {
        kind: "visited",
        d: `M405,170 420,182 440,187 455,180 462,152 485,150 488,165 480,190 495,215 490,235 498,285 512,325 490,360 475,378 430,390 412,380 408,330 430,305 445,275 437,262 430,215 425,190Z
        M140,420 158,418 155,435 172,437 168,458 155,468 170,478 180,500 195,518 208,525 205,545 195,556 165,555 135,566 152,550 142,538 160,528 148,518 165,505 162,485 150,480 138,470 135,450 128,450 135,435Z M105,495 115,480 130,488 128,530 110,540 88,543 90,525 85,510 90,495Z
        M285,495 300,492 310,502 335,500 338,520 342,548 318,565 330,600 310,608 285,602 268,605 272,582 255,568 255,535 262,515 275,508Z M262,515 255,535 255,568 240,565 218,552 232,545 238,518Z
        M335,505 355,495 375,488 400,497 425,495 435,520 433,550 420,578 398,578 375,570 355,558 340,552Z M315,565 340,552 378,572 360,588 330,585Z M300,605 325,605 335,590 360,588 362,605 345,622 320,625 298,612Z M258,622 270,608 298,610 298,628 280,635 262,640Z
        M215,552 235,565 272,582 268,605 258,620 262,655 245,668 225,665 215,682 178,668 182,640 172,612 143,598 145,588 165,590 175,575 200,572 208,555Z
        M103,665 130,665 175,668 215,682 225,690 200,700 188,720 190,738 175,752 150,758 132,762 118,750 122,700 125,685 100,682Z M103,685 125,685 122,750 100,748 98,735Z
        M262,655 270,640 298,628 328,618 325,635 318,650 342,680 375,705 378,720 362,712 358,738 350,735 345,715 320,700 298,680 290,658 270,668Z M318,742 348,738 345,755 330,752Z M275,700 288,695 288,725 277,728Z M280,676 287,675 285,690Z
        M388,630 400,632 410,650 425,662 420,680 400,682 395,662Z M390,685 420,680 425,695 405,712 398,725 390,705Z M400,712 425,695 470,692 465,702 440,705 430,715 440,740 445,752 425,762 410,745 400,728Z
        M460,700 485,695 470,708Z M472,708 500,695 525,686 560,690 590,702 625,700 640,710 645,745 600,752 575,760 545,758 520,765 490,755 470,750 468,725Z
        M612,672 640,680 665,695 640,698 622,695Z M640,700 668,695 690,700 697,715 685,732 665,728 645,718Z M520,780 542,770 535,780Z
        M550,825 575,812 590,808 590,820 572,840 552,855Z M545,822 552,820 550,850 543,850Z`,
      },
      {
        kind: "coast",
        d: `M325,205 345,190 M335,185 358,182 M345,175 365,190 M365,160 380,165 M375,152 395,145 M395,145 408,155 M415,128 430,140 M430,122 440,145 M445,118 455,135 M465,115 462,138 M485,118 478,135 M495,140 520,158 M243,350 268,352 M243,362 270,358 M245,378 265,375 M252,400 262,392 M118,430 125,440 M120,448 130,452 M158,412 162,405 M175,390 182,375 M115,342 125,348 120,360 M98,118 110,110 M375,440 388,432 M355,400 378,402 M418,410 430,418 M475,385 498,390 M355,638 375,660 388,690 M340,640 360,665 M425,715 450,745 M432,712 455,735 M440,755 458,762 M418,738 440,750 M455,720 465,735 M430,770 458,776 M395,725 410,740 M205,718 225,714 M305,485 315,490 M440,505 415,498 M520,840 535,862 M645,700 665,725 M738,1028 748,1029 M5,855 18,858 M30,860 55,852 M190,735 195,728 M555,780 550,820 M725,100 740,110 M280,490 290,500 M235,520 245,535`,
      },
      {
        kind: "dots",
        d: `M17,804h.1 M336,765h.1 M260,1155h.1 M266,1136h.1 M448,715h.1 M460,745h.1 M385,1h.1 M475,765h.1`,
      },
      { kind: "water", d: "M732,688 742,684 750,695 742,706 732,700Z" },
    ],
  },
  {
    name: "africa",
    transform: "translate(540 1920) scale(0.33333)",
    layers: [
      {
        kind: "visited",
        d: `M190,50 210,58 232,56 238,75 240,90 215,98 200,112 165,130 160,147 118,147 138,135 150,115 155,90 180,72Z M232,56 255,42 290,36 330,32 328,70 338,95 350,110 350,165 370,190 330,212 300,235 285,240 265,225 162,150 165,130 200,112 215,98 240,90Z M330,32 350,30 362,40 358,60 365,75 350,110 338,95 328,70Z M505,98 530,102 575,100 603,102 605,120 598,138 582,118 600,155 615,182 628,208 505,208Z
        M605,385 640,400 672,398 668,445 655,482 640,470 600,448Z M562,450 600,448 640,470 655,482 650,510 662,548 635,552 608,555 600,535 575,528 558,512 550,480Z
        M372,613 400,617 440,617 505,620 515,622 465,628 462,665 455,665 455,738 425,743 405,710 398,670 380,635Z M465,628 505,622 520,640 530,660 548,672 525,695 500,706 485,704 465,720 455,705 455,665 462,665Z M420,740 455,738 455,705 465,720 485,704 500,706 525,695 548,672 572,670 578,695 585,715 582,735 560,770 530,798 500,805 450,813 438,808 438,785 425,758Z`,
      },
      {
        kind: "land",
        d: `M118,147 160,147 160,165 128,165 128,195 118,213 78,213 90,180Z M80,213 118,213 128,195 128,165 160,165 160,152 185,178 195,278 130,282 118,268 100,265 78,275 85,245Z M183,176 200,176 285,240 292,275 250,285 225,295 205,315 195,335 170,332 165,312 135,308 130,280 195,278Z
        M285,240 300,235 330,212 370,192 400,197 412,240 405,270 390,298 350,302 320,298 285,300 278,310 262,300 255,285 292,275Z M408,195 497,232 495,275 480,298 480,325 460,345 440,350 415,358 400,340 390,298 405,270 412,240Z M362,85 390,88 412,100 445,112 455,105 455,90 475,85 505,98 505,230 410,195 370,190 350,165 350,110Z
        M497,232 505,230 505,208 628,208 640,255 628,280 615,310 600,345 590,315 580,330 555,332 505,338 492,325 478,305 495,275Z M78,290 85,270 105,265 130,282 135,308 90,308Z M85,312 135,308 165,312 170,345 172,392 145,375 120,350 100,325Z M168,335 215,335 222,385 190,385 172,390Z M220,325 255,325 262,378 230,388 218,375Z M200,330 205,315 225,295 250,285 262,300 278,312 260,325 220,325Z M258,330 272,318 285,308 278,372 266,375Z
        M285,300 320,298 390,298 400,312 385,340 365,372 345,375 325,392 305,390 300,375 278,372 282,330Z M400,312 400,340 408,352 400,375 410,412 345,412 340,385 365,372 385,340Z M405,360 440,350 460,345 480,325 505,355 530,385 500,385 470,392 450,390 435,402 410,412 400,380Z M500,340 555,332 580,330 590,315 600,345 590,355 605,385 590,395 560,398 530,385 505,355Z
        M600,345 620,310 628,288 660,290 690,315 695,330 710,350 742,355 720,382 700,392 665,400 640,400 605,385 590,355Z M628,285 635,262 645,255 655,275 692,308 685,315 660,290Z M700,322 735,325 775,316 770,340 750,380 730,405 695,425 672,455 670,400 700,392 720,382 742,355 710,350 695,330Z M562,448 558,405 570,398 600,392 605,420 600,448Z
        M435,400 450,390 500,385 530,385 560,398 565,410 553,450 550,480 558,512 545,530 550,572 520,555 495,552 475,545 472,510 440,520 425,515 415,497 378,492 400,482 415,465 430,430Z M345,412 410,412 425,402 440,402 430,430 415,465 400,482 378,488 360,470 345,450Z M378,497 415,497 425,515 440,520 472,510 478,548 495,552 495,568 475,570 475,605 480,620 440,617 372,613 375,590 390,560 385,525Z
        M475,570 495,568 495,552 520,560 550,572 545,530 570,522 590,530 592,580 560,592 540,605 515,622 495,620 480,615Z M595,535 608,555 635,552 662,548 668,575 662,600 625,625 605,642 612,690 580,712 575,672 588,640 585,602 560,595 592,580 612,608 608,590Z M515,622 540,602 560,598 585,605 588,640 572,670 548,668 530,655Z
        M528,748 542,740 551,748 540,762Z M565,712 578,708 580,722 568,724Z M755,562 765,590 758,610 742,655 730,695 712,705 697,695 692,665 705,635 700,605 730,592Z M118,338 135,333 142,350 130,362 120,355Z`,
      },
      {
        kind: "coast",
        d: `M795,308 806,309 M690,555 697,560 M703,563 707,564 M760,590 766,600 M680,315 692,325 M655,480 655,500 M68,136 78,140 M88,138 98,140 M105,135 112,128 M3,265 6,270 M0,282 5,283 M14,278 18,270 M348,410 350,420 M85,318 98,325 M82,300 106,298`,
      },
      {
        kind: "dots",
        d: `M78,84h.1 M104,517h.1 M192,601h.1 M817,485h.1 M817,656h.1 M839,647h.1 M713,568h.1 M734,556h.1 M687,612h.1 M319,435h.1 M326,421h.1`,
      },
      {
        kind: "land",
        d: `M348,425 370,425 368,414 345,414Z M370,425 372,440 368,462 395,460 398,425 385,418Z M550,455 562,455 565,470 552,476Z`,
      },
    ],
  },
];

const stats = [
  { label: "Países", value: "57", total: "/195", icon: <GlobeIcon /> },
  { label: "Estados dos EUA", value: "15", total: "/50", icon: <FoldedMapIcon /> },
  { label: "Dias no exterior", value: "776", total: "", icon: <SuitcaseIcon /> },
  { label: "Continentes", value: "5", total: "/7", icon: <AmericasIcon /> },
];

function GlobeIcon() {
  return (
    <svg viewBox="0 0 34 34" className="size-[34px]" fill="none" stroke="currentColor" strokeWidth="2.4">
      <circle cx="17" cy="17" r="15.4" />
      <ellipse cx="17" cy="17" rx="7.6" ry="15.4" />
      <path d="M17 1.6v30.8M1.6 17h30.8M5 7.5c6.5 4.8 17.5 4.8 24 0M5 26.5c6.5-4.8 17.5-4.8 24 0" />
    </svg>
  );
}

function FoldedMapIcon() {
  return (
    <svg viewBox="0 0 36 34" className="h-[34px] w-9" fill="none" stroke="currentColor" strokeWidth="3" strokeLinejoin="round">
      <path d="M2 7.5 12 2 24 8 34 2.5V26.5L24 32 12 26 2 31.5ZM12 2v24M24 8v24" />
    </svg>
  );
}

function SuitcaseIcon() {
  return (
    <svg viewBox="0 0 40 34" className="h-[34px] w-10" fill="currentColor">
      <path d="M5.5 6.500H6.500V33H5.500A5 5 0 0 1 .5 28V11.500a5 5 0 0 1 5-5ZM9 6.500h22V33H9ZM33.500 6.500h1a5 5 0 0 1 5 5V28a5 5 0 0 1-5 5h-1Z" />
      <path d="M13 7V4.500A3 3 0 0 1 16 1.500h8a3 3 0 0 1 3 3V7" fill="none" stroke="currentColor" strokeWidth="2.6" />
    </svg>
  );
}

function AmericasIcon() {
  return (
    <svg viewBox="0 0 34 34" className="size-[34px]" fill="currentColor">
      <circle cx="17" cy="17" r="15.5" fill="none" stroke="currentColor" strokeWidth="2.4" />
      <path d="M4 9C8 3 15 0 22 2.500L27.500 6.500 26 9.500 22.500 9 21 12.500 18.500 14.500 17.500 12.500 14.500 13.500 15 16.500 18 16 19.500 18.500 24.500 20.500 23 26 19.500 28 18 32 15.500 30.500 15 25.500 12 22 12.500 18.500 8.500 15.500 6.500 11.500Z" />
    </svg>
  );
}

function ShareIcon() {
  return (
    <svg viewBox="0 0 60 76" className="h-[76px] w-[60px]" fill="none" stroke="currentColor" strokeWidth="5" strokeLinecap="round" strokeLinejoin="round">
      <path d="M22 26H15A11 11 0 0 0 4 37V62A11 11 0 0 0 15 73H45A11 11 0 0 0 56 62V37A11 11 0 0 0 45 26H38M30 49V5M19 16 30 5 41 16" />
    </svg>
  );
}

function PlusIcon() {
  return (
    <svg viewBox="0 0 54 54" className="size-[54px]" fill="none" stroke="currentColor" strokeWidth="5.5" strokeLinecap="round">
      <path d="M27 3V51M3 27H51" />
    </svg>
  );
}

function Chevron({ className }: { className: string }) {
  return (
    <svg viewBox="0 0 18 32" className={className} fill="none" stroke="currentColor" strokeWidth="4" strokeLinecap="round" strokeLinejoin="round">
      <path d="M3 3 15 16 3 29" />
    </svg>
  );
}

function ListIcon() {
  return (
    <svg viewBox="0 0 72 56" className="h-14 w-[72px]" fill="currentColor">
      {[8, 28, 49].map((y) => (
        <g key={y}>
          <circle cx="6" cy={y} r="4.5" />
          <rect x="18" y={y - 3} width="53" height="6" rx="3" />
        </g>
      ))}
    </svg>
  );
}

function GridIcon() {
  return (
    <svg viewBox="0 0 64 64" className="size-16" fill="currentColor">
      <rect x="1" y="0" width="29" height="29" rx="7" />
      <rect x="35" y="0" width="29" height="29" rx="7" />
      <rect x="1" y="34" width="29" height="29" rx="7" />
      <rect x="35" y="34" width="29" height="29" rx="7" />
    </svg>
  );
}

function GearIcon() {
  return (
    <svg viewBox="-36 -36 72 72" className="size-[72px]" fill="currentColor">
      {[0, 45, 90, 135, 180, 225, 270, 315].map((angle) => (
        <path key={angle} transform={`rotate(${angle})`} d="M-11-22C-8.500-25-8-28-7.500-32Q-7-36-3.500-36H3.500Q7-36 7.500-32C8-28 8.500-25 11-22Z" />
      ))}
      <circle r="18.5" fill="none" stroke="currentColor" strokeWidth="13" />
    </svg>
  );
}

function StatusIcons() {
  return (
    <svg viewBox="0 0 262 44" className="h-11 w-[262px]" aria-label="Sinal, Wi-Fi e bateria">
      <rect x="1" y="26" width="11" height="16" rx="3.5" />
      <rect x="19" y="19" width="11" height="23" rx="3.5" />
      <rect x="37" y="10" width="11" height="32" rx="3.5" />
      <rect x="55" y="1" width="11" height="41" rx="3.5" />
      <path d="M117 42 109 33.500Q108 32 109.500 31Q117 26.500 124.500 31Q126 32 125 33.500Z" />
      <path d="M98.500 23Q117 7.500 135.500 23L130 28.500Q117 18 104 28.500Z" />
      <path d="M89 13.500Q117-12 145 13.500L139.500 19Q117-1 94.500 19Z" />
      <rect x="170.5" y="1.5" width="81" height="40" rx="12" fill="none" stroke="#000" strokeOpacity=".4" strokeWidth="3" />
      <rect x="176" y="7" width="70" height="29" rx="8" />
      <path d="M255 15.500Q260 17 260 21.500T255 28Z" fillOpacity=".45" />
    </svg>
  );
}

function EuFlag() {
  return (
    <svg viewBox="0 0 144 101" className="h-[101px] w-36 rounded-xl shadow-md" role="img" aria-label="União Europeia">
      <rect width="144" height="101" fill="#003399" />
      {Array.from({ length: 12 }, (_, i) => {
        const angle = (i * Math.PI) / 6;
        return (
          <polygon
            key={i}
            fill="#ffcc00"
            transform={`translate(${72 + 32 * Math.sin(angle)} ${51 - 32 * Math.cos(angle)})`}
            points="0,-5.5 1.3,-1.7 5.2,-1.7 2.1,.7 3.2,4.5 0,2.2 -3.2,4.5 -2.1,.7 -5.2,-1.7 -1.3,-1.7"
          />
        );
      })}
    </svg>
  );
}

function WorldMap() {
  return (
    <svg
      viewBox="48 1500 1224 820"
      className="w-full"
      role="img"
      aria-label="Mapa dos países visitados"
      strokeWidth="1.3"
      strokeLinejoin="round"
    >
      {regions.map((region) => (
        <g key={region.name} transform={region.transform}>
          {region.layers.map((layer, i) => (
            <path
              key={i}
              d={layer.d}
              vectorEffect="non-scaling-stroke"
              strokeLinecap={layer.kind === "dots" ? "round" : "butt"}
              className={layerClass[layer.kind]}
            />
          ))}
        </g>
      ))}
    </svg>
  );
}

function RoundButton({ label, children }: { label: string; children: ReactNode }) {
  return (
    <button
      aria-label={label}
      className="flex size-[132px] items-center justify-center rounded-full border-2 border-[#effcff] bg-[#e4f7ff] text-[#428fd3] shadow-[0_20px_80px_rgba(80,80,110,0.26)]"
    >
      {children}
    </button>
  );
}

function StayCard() {
  const used = 85;
  const limit = 90;

  return (
    <section className="mt-[37px] rounded-[52px] border-2 border-[#ebedef] bg-[#f6fafe] px-11 pt-12 pb-[17px]">
      <div className="flex h-[110px] items-start">
        <EuFlag />
        <div className="ml-[30px] pt-0.5">
          <h2 className="text-[49px] leading-[52px] font-semibold">Schengen</h2>
          <p className="text-[36px] leading-[56px] text-[#888b8f]">Regra de estadia curta</p>
        </div>
        <p className="ml-auto flex h-[101px] items-baseline leading-[101px]">
          <span className="text-[83px] font-bold text-[#ff902c]">{used}</span>
          <span className="ml-1.5 text-[49px] text-[#888b8f]">/ {limit}</span>
        </p>
      </div>
      <div className="mt-9 h-[35px] overflow-hidden rounded-full bg-[#d1d1d6]">
        <div
          className="h-full rounded-full bg-linear-to-r from-[#ff8d28] to-[#f2a056]"
          style={{ width: `${(used / limit) * 100}%` }}
        />
      </div>
      <div className="mt-10 flex justify-between text-[44px] leading-[60px] text-[#888b8f]">
        <span>{limit - used} dias restantes</span>
        <span>Últimos 180 dias</span>
      </div>
      <div className="mt-[18px] flex justify-center gap-[15px]">
        <span className="h-1.5 w-[42px] rounded-full bg-[#bdc0c3]" />
        <span className="h-1.5 w-6 rounded-full bg-[#e0e3e6]" />
      </div>
    </section>
  );
}

function StatsCard() {
  return (
    <section className="mt-[62px] rounded-[52px] border-2 border-[#ebedef] bg-[#f6fafe]">
      <button className="flex h-[131px] w-full items-center gap-7 pl-[38px] text-[49px] font-semibold">
        Estatísticas · Todo o período
        <Chevron className="h-8 w-[18px] text-[#888b8f]" />
      </button>
      <div className="-mx-1 grid grid-cols-2">
        {stats.map((stat) => (
          <button
            key={stat.label}
            className="flex items-center justify-between border-t-2 border-[#bcc0c4] pt-6 pr-8 pb-[21px] pl-[42px] text-left even:border-l"
          >
            <span>
              <span className="flex items-center gap-4 text-[36px] leading-10 font-medium text-[#888b8f]">
                <span className="text-[#428fd3]">{stat.icon}</span>
                {stat.label}
              </span>
              <span className="mt-4 block text-[62px] leading-[72px] font-bold">
                {stat.value}
                <span className="text-[#888b8f]">{stat.total}</span>
              </span>
            </span>
            <Chevron className="h-8 w-[18px] text-[#bdc0c3]" />
          </button>
        ))}
      </div>
    </section>
  );
}

function TabItem({ label, active, children }: { label: string; active?: boolean; children: ReactNode }) {
  return (
    <a
      href="#"
      aria-current={active ? "page" : undefined}
      className={`flex h-[162px] flex-col items-center rounded-full pt-6 text-[30px] leading-10 ${
        active ? "-mx-3 bg-[#e9e9ed] font-semibold text-[#3784cb]" : "font-medium text-[#1a1a1e]"
      }`}
    >
      <span className="mb-[7px] flex h-[72px] items-center">{children}</span>
      {label}
    </a>
  );
}

export default function App() {
  return (
    <div className="flex min-h-screen flex-col bg-[linear-gradient(to_bottom,#cde3f7_0%,#dae6f5_18%,#e8edf7_52%,#eff1f7_78%,#f0f0f5_100%)] font-['Inter',sans-serif] text-black">
      <div className="flex h-[186px] items-center justify-between pt-2 pr-[120px] pl-[178px]">
        <span className="text-[53px] font-semibold">09:41</span>
        <StatusIcons />
      </div>
      <header className="flex justify-between px-[60px]">
        <RoundButton label="Compartilhar">
          <ShareIcon />
        </RoundButton>
        <RoundButton label="Adicionar">
          <PlusIcon />
        </RoundButton>
      </header>
      <main className="px-[50px]">
        <h1 className="mt-[68px] pl-2.5 text-[79px] leading-[96px] font-bold">Terça-feira, 1 setembro</h1>
        <StayCard />
        <StatsCard />
        <div className="-mx-0.5 mt-[62px]">
          <WorldMap />
        </div>
      </main>
      <nav className="mx-auto mt-auto mb-[63px] grid w-[1023px] max-w-full grid-cols-3 rounded-full bg-[#fcfcff] px-6 py-3 shadow-[0_16px_80px_rgba(0,0,0,0.08)]">
        <TabItem label="Linha do tempo">
          <ListIcon />
        </TabItem>
        <TabItem label="Painel" active>
          <GridIcon />
        </TabItem>
        <TabItem label="Ajustes">
          <GearIcon />
        </TabItem>
      </nav>
    </div>
  );
}
